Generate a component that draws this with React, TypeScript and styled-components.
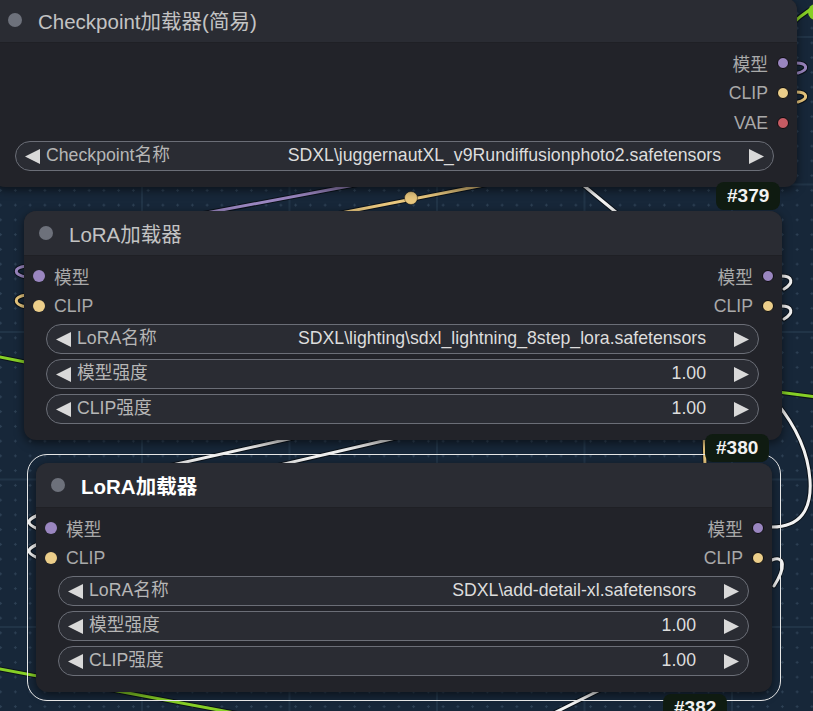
import React from 'react'
import styled, { createGlobalStyle } from 'styled-components'

type SlotType = 'MODEL' | 'CLIP' | 'VAE'

const slotColors: Record<SlotType, string> = {
  MODEL: '#9a86c0',
  CLIP: '#ecce8a',
  VAE: '#c75b63',
}

interface Slot {
  label: string
  type: SlotType
}

interface Widget {
  label: string
  value: string
}

interface NodeData {
  id: number
  title: string
  x: number
  y: number
  w: number
  inputs: Slot[]
  outputs: Slot[]
  widgets: Widget[]
  selected?: boolean
  badge: { x: number; y: number }
}

const nodes: NodeData[] = [
  {
    id: 379,
    title: 'Checkpoint加载器(简易)',
    x: -7,
    y: -2,
    w: 804,
    inputs: [],
    outputs: [
      { label: '模型', type: 'MODEL' },
      { label: 'CLIP', type: 'CLIP' },
      { label: 'VAE', type: 'VAE' },
    ],
    widgets: [{ label: 'Checkpoint名称', value: 'SDXL\\juggernautXL_v9Rundiffusionphoto2.safetensors' }],
    badge: { x: 716, y: 182 },
  },
  {
    id: 380,
    title: 'LoRA加载器',
    x: 24,
    y: 211,
    w: 758,
    inputs: [
      { label: '模型', type: 'MODEL' },
      { label: 'CLIP', type: 'CLIP' },
    ],
    outputs: [
      { label: '模型', type: 'MODEL' },
      { label: 'CLIP', type: 'CLIP' },
    ],
    widgets: [
      { label: 'LoRA名称', value: 'SDXL\\lighting\\sdxl_lightning_8step_lora.safetensors' },
      { label: '模型强度', value: '1.00' },
      { label: 'CLIP强度', value: '1.00' },
    ],
    badge: { x: 705, y: 434 },
  },
  {
    id: 382,
    title: 'LoRA加载器',
    x: 36,
    y: 463,
    w: 736,
    selected: true,
    inputs: [
      { label: '模型', type: 'MODEL' },
      { label: 'CLIP', type: 'CLIP' },
    ],
    outputs: [
      { label: '模型', type: 'MODEL' },
      { label: 'CLIP', type: 'CLIP' },
    ],
    widgets: [
      { label: 'LoRA名称', value: 'SDXL\\add-detail-xl.safetensors' },
      { label: '模型强度', value: '1.00' },
      { label: 'CLIP强度', value: '1.00' },
    ],
    badge: { x: 663, y: 694 },
  },
]

// links, only the bits that show between the nodes
const links: { d: string; color: string }[] = [
  { d: 'M 100 233 L 450 167', color: '#9a86c0' },
  { d: 'M 300 221 L 520 178', color: '#e8c77e' },
  { d: 'M 560 166 L 640 232', color: '#f2f2f2' },
  { d: 'M 790 26 Q 802 14 816 6', color: '#86cf26' },
  { d: 'M 796 63 C 808 63 809 70 798 73', color: '#9a86c0' },
  { d: 'M 796 92 C 808 92 809 99 798 102', color: '#e8c77e' },
  { d: 'M 26 266 C 13 268 13 274 26 277', color: '#9a86c0' },
  { d: 'M 26 295 C 13 297 13 304 26 307', color: '#e8c77e' },
  { d: 'M 781 276 C 793 276 794 283 784 289', color: '#f2f2f2' },
  { d: 'M 781 306 C 793 306 794 313 784 319', color: '#f2f2f2' },
  { d: 'M 778 392 L 816 397', color: '#86cf26' },
  { d: 'M 772 527 C 800 527 812 510 810 480 C 808 450 795 425 776 402', color: '#f2f2f2' },
  { d: 'M 772 560 C 785 555 786 567 774 586', color: '#f2f2f2' },
  { d: 'M 38 515 C 31 518 29 521 29 522 C 29 524 31 526 38 529', color: '#f2f2f2' },
  { d: 'M 38 544 C 31 547 29 550 29 551 C 29 553 31 555 38 558', color: '#f2f2f2' },
  { d: 'M 150 470 L 320 432', color: '#f2f2f2' },
  { d: 'M 250 472 L 430 430', color: '#f2f2f2' },
  { d: 'M 704 432 L 705 466', color: '#e8c77e' },
  { d: 'M 548 716 L 606 687', color: '#f2f2f2' },
  { d: 'M -5 668 L 240 714', color: '#86cf26' },
  { d: 'M -5 356 L 30 363', color: '#86cf26' },
]

const GlobalStyle = createGlobalStyle`
  html, body {
    margin: 0;
    padding: 0;
    overflow: hidden;
    background: #172739;
  }
  body {
    font-family: 'Liberation Sans', 'Noto Sans CJK SC', sans-serif;
  }
`

const Canvas = styled.div`
  position: relative;
  width: 813px;
  height: 711px;
  overflow: hidden;
  background-color: #172739;
  background-image: linear-gradient(to right, #213447 1.5px, transparent 1.5px),
    linear-gradient(to bottom, #213447 1.5px, transparent 1.5px),
    radial-gradient(circle, #2d4054 1.1px, transparent 1.4px);
  background-size: 147.5px 147.5px, 147.5px 147.5px, 14.75px 14.75px;
  background-position: 141px 0, 0 36px, 8px 6px;
`

const Links = styled.svg`
  position: absolute;
  left: 0;
  top: 0;
`

const NodeBox = styled.div<{ $x: number; $y: number; $w: number }>`
  position: absolute;
  left: ${({ $x }) => $x}px;
  top: ${({ $y }) => $y}px;
  width: ${({ $w }) => $w}px;
  background: #222329;
  border-radius: 12px;
  box-shadow: 0 3px 10px rgba(0, 0, 0, 0.55);
`

const Selection = styled.div`
  position: absolute;
  inset: -9px;
  border: 1.5px solid #e6e6e6;
  border-radius: 20px;
  pointer-events: none;
`

const TitleBar = styled.div`
  display: flex;
  align-items: center;
  gap: 16px;
  height: 45px;
  padding-left: 15px;
  background: #2a2c33;
  border-radius: 12px 12px 0 0;
  border-bottom: 1px solid #1f2025;
  box-sizing: border-box;
`

const TitleDot = styled.span`
  width: 14px;
  height: 14px;
  border-radius: 50%;
  background: #6d717b;
`

const Title = styled.span<{ $selected?: boolean }>`
  font-size: 20.5px;
  color: ${({ $selected }) => ($selected ? '#ffffff' : '#c3c3c3')};
  font-weight: ${({ $selected }) => ($selected ? 700 : 400)};
`

const Body = styled.div`
  padding: 5px 0 16px;
`

const SlotRow = styled.div`
  display: flex;
  align-items: center;
  justify-content: space-between;
  height: 30px;
`

const SlotLabel = styled.div<{ $side: 'in' | 'out' }>`
  display: flex;
  align-items: center;
  gap: 9px;
  padding: ${({ $side }) => ($side === 'in' ? '0 0 0 9px' : '0 8px 0 0')};
  margin-left: ${({ $side }) => ($side === 'out' ? 'auto' : '0')};
  font-size: 17.7px;
  color: #a9a9a9;
`

const SlotDot = styled.span<{ $color: string; $ring?: boolean }>`
  width: ${({ $ring }) => ($ring ? 10 : 12)}px;
  height: ${({ $ring }) => ($ring ? 10 : 12)}px;
  border-radius: 50%;
  background: ${({ $color }) => $color};
  border: ${({ $ring }) => ($ring ? '1.5px solid #0b0b0d' : 'none')};
`

const WidgetList = styled.div`
  display: flex;
  flex-direction: column;
  gap: 5px;
  padding: 3px 23px 0 22px;
`

const WidgetRow = styled.div`
  display: flex;
  align-items: baseline;
  height: 30px;
  line-height: 27px;
  padding: 0 9px;
  box-sizing: border-box;
  background: #2a2c33;
  border: 1.5px solid #6b6e77;
  border-radius: 15px;
  font-size: 17.7px;
  white-space: nowrap;
`

const ArrowIcon = styled.svg`
  align-self: center;
  flex-shrink: 0;
`

const WidgetLabel = styled.span`
  margin-left: 6px;
  color: #b6b6b6;
`

const WidgetValue = styled.span`
  margin-left: auto;
  margin-right: 28px;
  color: #dddddd;
`

const Badge = styled.div<{ $x: number; $y: number }>`
  position: absolute;
  left: ${({ $x }) => $x}px;
  top: ${({ $y }) => $y}px;
  height: 28px;
  padding: 0 11px;
  line-height: 28px;
  background: #0f1b11;
  border-radius: 8px;
  color: #f2f2f2;
  font-size: 19px;
  font-weight: 700;
`

const Arrow = ({ dir }: { dir: 'left' | 'right' }) => (
  <ArrowIcon width="15" height="15" viewBox="0 0 15 15">
    <polygon points={dir === 'left' ? '15,0 15,15 0,7.5' : '0,0 0,15 15,7.5'} fill="#d9d9d9" />
  </ArrowIcon>
)

const Node = ({ node }: { node: NodeData }) => {
  const rows = Math.max(node.inputs.length, node.outputs.length)
  return (
    <NodeBox $x={node.x} $y={node.y} $w={node.w}>
      {node.selected && <Selection />}
      <TitleBar>
        <TitleDot />
        <Title $selected={node.selected}>{node.title}</Title>
      </TitleBar>
      <Body>
        {Array.from({ length: rows }).map((_, i) => {
          const input = node.inputs[i]
          const output = node.outputs[i]
          return (
            <SlotRow key={i}>
              {input && (
                <SlotLabel $side="in">
                  <SlotDot $color={slotColors[input.type]} />
                  {input.label}
                </SlotLabel>
              )}
              {output && (
                <SlotLabel $side="out">
                  {output.label}
                  <SlotDot $color={slotColors[output.type]} $ring />
                </SlotLabel>
              )}
            </SlotRow>
          )
        })}
        <WidgetList>
          {node.widgets.map(widget => (
            <WidgetRow key={widget.label}>
              <Arrow dir="left" />
              <WidgetLabel>{widget.label}</WidgetLabel>
              <WidgetValue>{widget.value}</WidgetValue>
              <Arrow dir="right" />
            </WidgetRow>
          ))}
        </WidgetList>
      </Body>
    </NodeBox>
  )
}

const App: React.FC = () => {
  return (
    <Canvas>
      <GlobalStyle />
      <Links width="813" height="711" viewBox="0 0 813 711">
        {links.map((link, i) => (
          <g key={i} fill="none" strokeLinecap="round">
            <path d={link.d} stroke="rgba(0,0,0,0.55)" strokeWidth={5} />
            <path d={link.d} stroke={link.color} strokeWidth={3} />
          </g>
        ))}
        <circle cx={411} cy={198} r={6.5} fill="#e8c77e" stroke="rgba(0,0,0,0.4)" strokeWidth={1} />
        <circle cx={816} cy={12} r={8} fill="#86cf26" />
      </Links>
      {nodes.map(node => (
        <Node key={node.id} node={node} />
      ))}
      {nodes.map(node => (
        <Badge key={node.id} $x={node.badge.x} $y={node.badge.y}>
          #{node.id}
        </Badge>
      ))}
    </Canvas>
  )
}

export default App
